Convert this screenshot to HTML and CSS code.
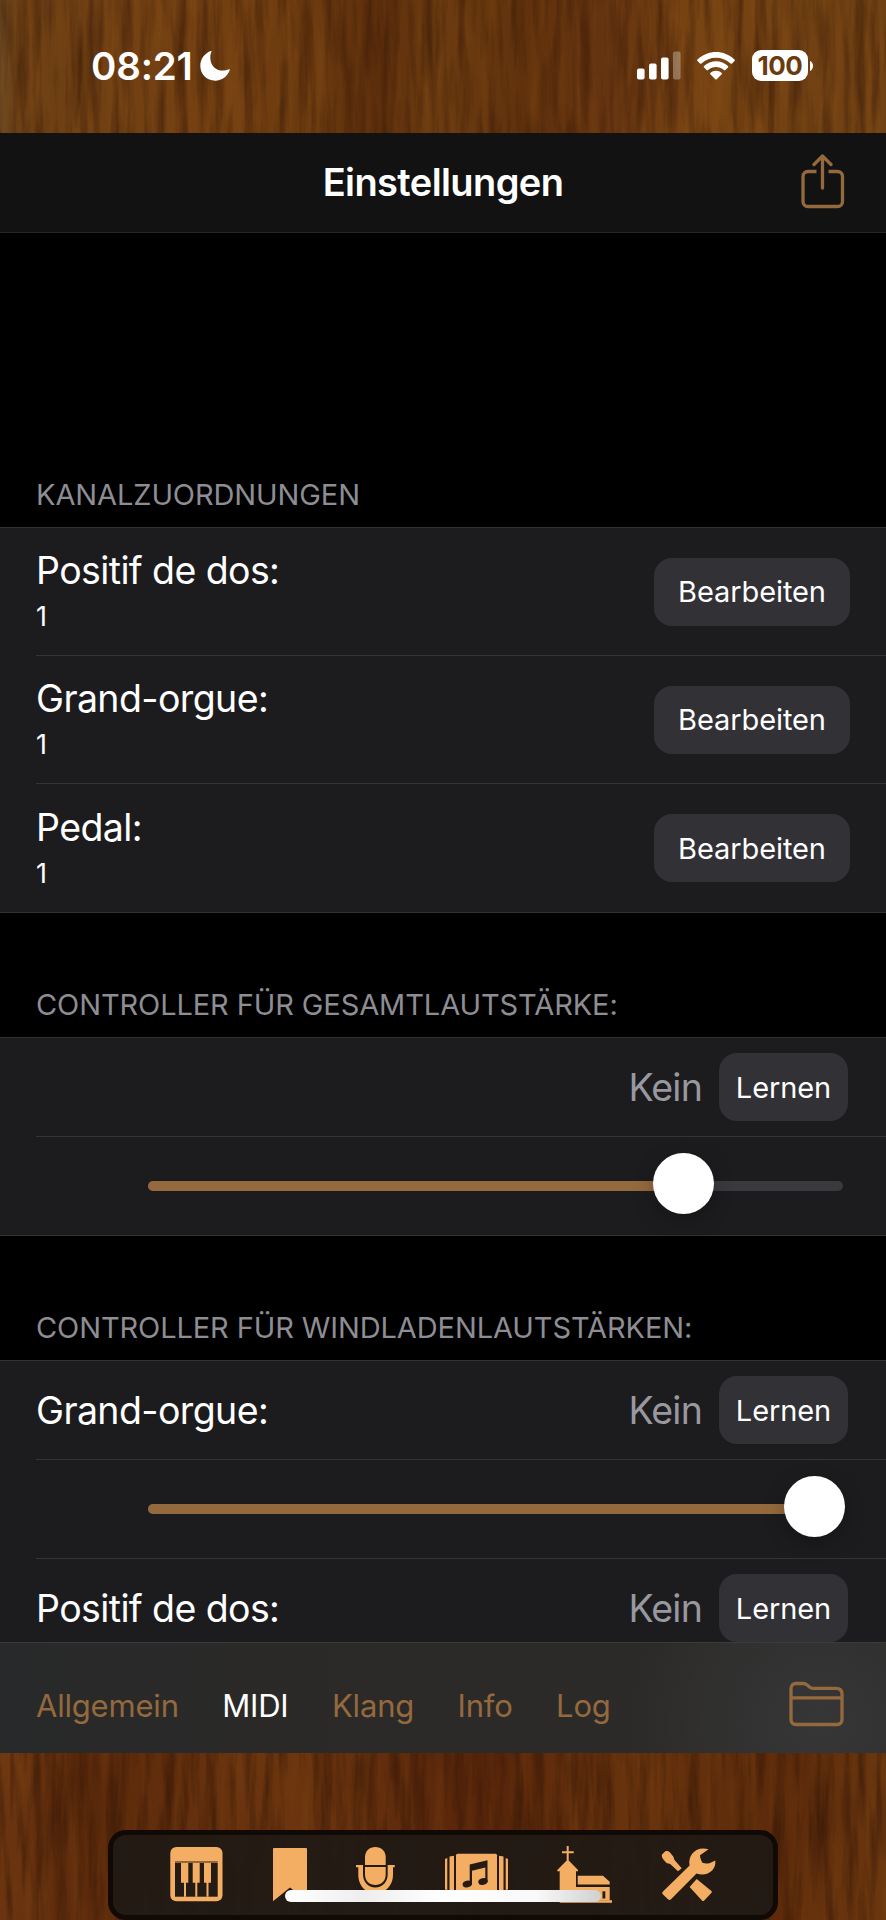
FILE: index.html
```
<!DOCTYPE html>
<html lang="de">
<head>
    <meta charset="UTF-8">
    <meta name="viewport" content="width=device-width, initial-scale=1.0">
    <title>Einstellungen</title>
    <link rel="stylesheet" href="styles.css">
</head>
<body>
    <div class="screen">
        <!-- wood grain behind everything -->
        <svg class="wood" width="886" height="1920">
            <defs>
                <linearGradient id="woodTop" x1="0" x2="1" y1="0" y2="0">
                    <stop offset="0" stop-color="#6f4a22"/>
                    <stop offset="0.02" stop-color="#6c3f14"/>
                    <stop offset="0.22" stop-color="#754112"/>
                    <stop offset="0.36" stop-color="#6a390f"/>
                    <stop offset="0.42" stop-color="#5d2e0c"/>
                    <stop offset="0.5" stop-color="#6b3b10"/>
                    <stop offset="0.6" stop-color="#60310c"/>
                    <stop offset="0.68" stop-color="#643310"/>
                    <stop offset="0.78" stop-color="#784413"/>
                    <stop offset="1" stop-color="#6e4013"/>
                </linearGradient>
                <linearGradient id="woodBottom" x1="0" x2="1" y1="0" y2="0">
                    <stop offset="0" stop-color="#6b3510"/>
                    <stop offset="0.1" stop-color="#5c2a0b"/>
                    <stop offset="0.33" stop-color="#6b350f"/>
                    <stop offset="0.55" stop-color="#56240a"/>
                    <stop offset="0.72" stop-color="#69340e"/>
                    <stop offset="0.88" stop-color="#5c2a0b"/>
                    <stop offset="1" stop-color="#6a370f"/>
                </linearGradient>
                <filter id="grain" x="0" y="0" width="100%" height="100%" color-interpolation-filters="sRGB">
                    <feTurbulence type="fractalNoise" baseFrequency="0.09 0.008" numOctaves="4" seed="7"/>
                    <feColorMatrix values="0 0 0 0 0.17  0 0 0 0 0.07  0 0 0 0 0.02  2 0 0 0 -0.85"/>
                </filter>
                <filter id="shine" x="0" y="0" width="100%" height="100%" color-interpolation-filters="sRGB">
                    <feTurbulence type="fractalNoise" baseFrequency="0.06 0.006" numOctaves="3" seed="21"/>
                    <feColorMatrix values="0 0 0 0 0.58  0 0 0 0 0.34  0 0 0 0 0.1  0 1.4 0 0 -0.64"/>
                </filter>
            </defs>
            <rect width="886" height="140" fill="url(#woodTop)"/>
            <rect width="886" height="140" filter="url(#shine)" opacity="0.5"/>
            <rect width="886" height="140" filter="url(#grain)" opacity="0.6"/>
            <rect y="1740" width="886" height="180" fill="url(#woodBottom)"/>
            <rect y="1740" width="886" height="180" filter="url(#shine)" opacity="0.35"/>
            <rect y="1740" width="886" height="180" filter="url(#grain)" opacity="0.7"/>
        </svg>

        <div class="statusbar">
            <span class="time">08:21</span>
            <svg class="moon" width="30" height="30" viewBox="0 0 30 30">
                <path fill="#fff" d="M11.5 0.6C10.5 3 10.2 5 10.4 8C10.9 15 16 19.600 22.5 19.600C25 19.600 27 19.200 29 18.300C29.600 18.100 30 18.500 29.800 19.100C27.500 25.500 22 29.700 15.300 29.700C6.800 29.700 0.300 23.300 0.300 14.800C0.300 8.200 4.400 2.600 10.700 0.100C11.400 -0.100 11.800 0.100 11.500 0.600Z"/>
            </svg>
            <svg class="signal" width="44" height="29" viewBox="0 0 44 29" fill="#fff">
                <rect x="0" y="17.500" width="7.600" height="11" rx="2"/>
                <rect x="12" y="12.500" width="7.600" height="16" rx="2"/>
                <rect x="24" y="6.500" width="7.600" height="22" rx="2"/>
                <rect x="36" y="0.500" width="7.600" height="28" rx="2" opacity="0.3"/>
            </svg>
            <svg class="wifi" width="38" height="28" viewBox="0 0 38 28" fill="#fff">
                <path d="M0.500 7.500C11 -2.500 27 -2.500 37.500 7.500C37.900 7.900 37.900 8.500 37.500 8.900L35 11.500C34.600 11.900 34 11.900 33.600 11.500C25.300 3.800 12.700 3.800 4.400 11.500C4 11.900 3.400 11.900 3 11.500L0.500 8.900C0.100 8.500 0.100 7.900 0.500 7.500Z"/>
                <path d="M7 14.100C13.800 7.700 24.200 7.700 31 14.100C31.400 14.500 31.400 15.100 31 15.500L28.400 18.100C28 18.500 27.400 18.500 27 18.100C22.400 14 15.600 14 11 18.100C10.600 18.500 10 18.500 9.600 18.100L7 15.500C6.600 15.100 6.600 14.500 7 14.100Z"/>
                <path d="M13.300 20.900C16.500 18.100 21.500 18.100 24.700 20.900C25.100 21.300 25.100 21.800 24.700 22.200L19.700 27.200C19.300 27.600 18.700 27.600 18.300 27.200L13.300 22.200C12.900 21.800 12.900 21.300 13.300 20.900Z"/>
            </svg>
            <span class="battery">100</span>
            <svg class="cap" width="3" height="10" viewBox="0 0 3 10"><path fill="#fff" d="M0 0C4 1.500 4 8.500 0 10Z"/></svg>
        </div>

        <div class="navbar">
            <h1>Einstellungen</h1>
            <svg class="share" width="44" height="56" viewBox="0 0 44 56" fill="none" stroke="#94693d" stroke-width="3.300" stroke-linecap="round" stroke-linejoin="round">
                <path stroke-linecap="butt" d="M15.500 17.500H7C4 17.500 2 19.500 2 22.500V47.500C2 50.500 4 52.500 7 52.500H36.500C39.500 52.500 41.500 50.500 41.500 47.500V22.500C41.500 19.500 39.500 17.500 36.500 17.500H27.500"/>
                <path d="M21.500 34V2.500M13 10.500L21.500 2L30 10.500"/>
            </svg>
        </div>

        <div class="content">
            <h2 class="first">KANALZUORDNUNGEN</h2>
            <div class="group">
                <div class="row tall">
                    <div class="channel"><span class="label">Positif de dos:</span><span class="sub">1</span></div>
                    <button class="edit">Bearbeiten</button>
                </div>
                <div class="row tall">
                    <div class="channel"><span class="label">Grand-orgue:</span><span class="sub">1</span></div>
                    <button class="edit">Bearbeiten</button>
                </div>
                <div class="row tall">
                    <div class="channel"><span class="label">Pedal:</span><span class="sub">1</span></div>
                    <button class="edit">Bearbeiten</button>
                </div>
            </div>

            <h2>CONTROLLER FÜR GESAMTLAUTSTÄRKE:</h2>
            <div class="group">
                <div class="row">
                    <span class="label"></span>
                    <span class="value">Kein</span>
                    <button class="learn">Lernen</button>
                </div>
                <div class="row">
                    <div class="slider">
                        <div class="fill" style="width: 77%"></div>
                        <div class="thumb" style="left: 504.500px"></div>
                    </div>
                </div>
            </div>

            <h2>CONTROLLER FÜR WINDLADENLAUTSTÄRKEN:</h2>
            <div class="group">
                <div class="row">
                    <span class="label">Grand-orgue:</span>
                    <span class="value">Kein</span>
                    <button class="learn">Lernen</button>
                </div>
                <div class="row">
                    <div class="slider">
                        <div class="fill" style="width: 98%"></div>
                        <div class="thumb" style="left: 635.500px"></div>
                    </div>
                </div>
                <div class="row">
                    <span class="label">Positif de dos:</span>
                    <span class="value">Kein</span>
                    <button class="learn">Lernen</button>
                </div>
            </div>
        </div>

        <div class="toolbar">
            <a class="tab">Allgemein</a>
            <a class="tab active">MIDI</a>
            <a class="tab">Klang</a>
            <a class="tab">Info</a>
            <a class="tab">Log</a>
            <svg class="folder" width="56" height="46" viewBox="0 0 56 46" fill="none" stroke="#94693d" stroke-width="3.300" stroke-linejoin="round">
                <path d="M2 38V8C2 4.500 4 2.500 7 2.500H14C16 2.500 17.200 3.200 18.500 4.300L20.500 6C21.700 7 22.700 7.300 24 7.300H47C51 7.300 53 9.300 53 13V38C53 41.500 51 43.500 48 43.500H7C4 43.500 2 41.500 2 38Z"/>
                <path d="M2 16.800H53"/>
            </svg>
        </div>

        <div class="footer">
            <div class="dock">
                <!-- keyboard -->
                <svg width="53" height="58" viewBox="0 0 53 58">
                    <rect x="0.300" y="1" width="52.200" height="54.300" rx="6" fill="#f3ae64"/>
                    <rect x="5" y="15" width="42.700" height="2" fill="#94673a"/>
                    <rect x="5" y="17" width="42.700" height="33.700" fill="#241b14"/>
                    <path fill="#f3ae64" d="M11 17h7.300v19.700h-2.300v14h-2v-14h-3zM22.700 17h7v19.700h-2.400v14h-2v-14h-2.600zM34 17h7v19.700h-2.500v14h-2v-14h-2.500z"/>
                </svg>
                <!-- bookmark -->
                <svg width="34" height="58" viewBox="0 0 34 58">
                    <path fill="#f3ae64" d="M0 3a1 1 0 0 1 1-1h32a1 1 0 0 1 1 1v52L17 41.500L0 55.300Z"/>
                </svg>
                <!-- microphone -->
                <svg width="39" height="58" viewBox="0 0 39 58" fill="#f3ae64">
                    <path d="M9 19V11.300C9 5 13.500 1 19.300 1S29.700 5 29.700 11.300V19Z"/>
                    <path d="M9 21H29.700V28.500C29.700 35 25 39 19.300 39S9 35 9 28.500Z"/>
                    <path d="M0 19H7V28C7 36 12 41.500 19.300 41.500S31.700 36 31.700 28V19H38.700V21.300H37V29C37 38 31.500 45 23.500 46.500H15.200C7.500 45 2.300 38 2.300 29V21.300H0Z"/>
                </svg>
                <!-- combinations -->
                <svg width="63" height="58" viewBox="0 0 63 58">
                    <g fill="#f3ae64">
                        <rect x="11" y="7.700" width="41" height="44" rx="1.500"/>
                        <path d="M4.500 10.500L9 9.700V48H4.500ZM58.500 10.500L54 9.700V48H58.500ZM0 13L2.300 12V44L0 43.500ZM63 13L60.700 12V44L63 43.500Z"/>
                    </g>
                    <g fill="#241b14">
                        <path d="M24.700 18.500L42.500 14.300V36H40.300V21.500L27 24.800V38.500H24.700Z"/>
                        <ellipse cx="22.300" cy="38" rx="4.800" ry="3.300" transform="rotate(-15 22.300 38)"/>
                        <ellipse cx="38" cy="35.500" rx="4.800" ry="3.300" transform="rotate(-15 38 35.500)"/>
                    </g>
                </svg>
                <!-- church -->
                <svg width="55" height="58" viewBox="0 0 55 58">
                    <path fill="#f3ae64" d="M9.700 0H11.700V5.300H16.700V7.200H11.700V14.500L21 24V25.300H19V54.300H55V56.700H2.700V25.300H0.300V24L9.700 14.500V7.200H5V5.300H9.700Z"/>
                    <path fill="#f3ae64" d="M20.700 29.800H46L52.700 35.700V38.400H20.700ZM19 41H52.700V54.500H19Z"/>
                    <path fill="#241b14" d="M45.500 45.300H48.300V52.500H45.500Z"/>
                </svg>
                <!-- tools -->
                <svg width="54" height="58" viewBox="0 0 54 58" fill="#f3ae64">
                    <path d="M0 8.500L3.300 5.200C5 4.800 7.300 5.300 8.200 6.700L11.200 10.500C12 11.700 11.700 12.700 12.500 14L19.700 22.200L16 25.300L8.500 18.300C7 17.200 5.500 17.800 4 16.500L1 13C0 11.500-0.500 9.800 0 8.500Z"/>
                    <path d="M34.700 33L49.400 45C50 45.500 50 46.200 49.500 46.800L42.200 54.500C41.500 55.200 40.700 55.200 40 54.500L27.600 41Z"/>
                    <path d="M1 45.500L27.600 19.500C25.500 8.500 35 -0.500 46.500 3.300L38 9.200C38.200 12 39 14.500 40.500 16.800C43 17.800 45.500 17.700 48 17L53.300 14.500C54.500 24 45.500 31 34.500 27.600L9 53.300C8 54.300 7 54.300 6 53.300L1 48.500C0 47.500 0 46.500 1 45.500Z"/>
                </svg>
            </div>
            <div class="home"></div>
        </div>
    </div>
</body>
</html>
```
FILE: styles.css
```
body{
    margin: 0;
    background-color: black;
    color: white;
    font-family: Inter, "Liberation Sans", sans-serif;
}
.screen{
    position: relative;
    width: 886px;
    height: 1920px;
    overflow: hidden;
    display: flex;
    flex-direction: column;
}
.screen > div{
    position: relative;
    box-sizing: border-box;
    flex-shrink: 0;
}
.wood{
    position: absolute;
    top: 0;
    left: 0;
}
.statusbar{
    height: 133px;
    padding: 0 73px 2px 91px;
    display: flex;
    align-items: center;
}
.time{
    width: 109px;
    font-size: 38.500px;
    font-weight: 600;
    letter-spacing: -0.2px;
}
.moon{
    margin-right: auto;
}
.signal{
    margin-right: 16px;
}
.wifi{
    margin-right: 17px;
}
.battery{
    width: 56px;
    height: 31px;
    line-height: 31px;
    border-radius: 9px;
    background-color: white;
    color: #6b3b10;
    text-align: center;
    font-size: 26px;
    font-weight: 700;
    letter-spacing: -0.5px;
}
.cap{
    margin-left: 2px;
}
.navbar{
    height: 100px;
    background-color: #121212;
    border-bottom: 1px solid #262626;
    display: flex;
    align-items: center;
    justify-content: center;
}
h1{
    margin: 0;
    padding-bottom: 1px;
    font-size: 38px;
    font-weight: 600;
    letter-spacing: -0.6px;
}
.share{
    position: absolute;
    right: 41px;
    top: 21px;
}
.content{
    height: 1409px;
    background-color: black;
    overflow: hidden;
}
h2{
    box-sizing: border-box;
    height: 124px;
    margin: 0;
    padding: 0 36px 14px;
    display: flex;
    align-items: flex-end;
    color: #8d8d93;
    font-size: 29px;
    line-height: 36px;
    font-weight: 400;
    letter-spacing: -0.1px;
}
h2.first{
    height: 294px;
}
.group{
    background-color: #1c1c1e;
    border-top: 1px solid #313133;
    border-bottom: 1px solid #313133;
}
.row{
    box-sizing: border-box;
    height: 99px;
    margin-left: 36px;
    padding-right: 38px;
    border-bottom: 1px solid #343436;
    display: flex;
    align-items: center;
}
.row:last-child{
    height: 98px;
    border-bottom: none;
}
.row.tall{
    height: 128px;
    padding-right: 36px;
}
.label{
    flex: 1;
    font-size: 37.500px;
    line-height: 46px;
    letter-spacing: -0.6px;
}
.row > .label{
    padding-top: 2px;
}
.channel{
    flex: 1;
    display: flex;
    flex-direction: column;
    padding-top: 4px;
}
.sub{
    font-size: 27px;
    line-height: 45px;
}
.value{
    margin-right: 17px;
    padding-top: 1px;
    color: #98989f;
    font-size: 37.500px;
    letter-spacing: -0.8px;
}
button{
    height: 68px;
    padding: 0;
    border: none;
    border-radius: 18px;
    background-color: #313136;
    color: white;
    font-family: inherit;
    font-size: 29px;
    font-weight: 400;
    letter-spacing: -0.1px;
}
.edit{
    width: 196px;
}
.learn{
    width: 129px;
}
.slider{
    position: relative;
    width: 695px;
    height: 10px;
    margin-left: 112px;
    border-radius: 5px;
    background-color: #3a3a3e;
}
.fill{
    height: 10px;
    border-radius: 5px;
    background-color: #94693d;
}
.thumb{
    position: absolute;
    top: -28px;
    width: 61px;
    height: 61px;
    border-radius: 50%;
    background-color: white;
    box-shadow: 0 6px 20px rgba(0, 0, 0, 0.25);
}
.toolbar{
    height: 111px;
    padding: 15px 41px 0 36px;
    border-top: 1px solid #3b3b3b;
    background: radial-gradient(circle at 820px 80px, #363636 0, #333333 60px, rgba(44, 42, 40, 0) 190px), linear-gradient(90deg, #28292a, #2c2a28 45%, #2c2b29);
    display: flex;
    align-items: center;
    gap: 43.500px;
}
.tab{
    color: #94693d;
    font-size: 31px;
    letter-spacing: -0.2px;
}
.tab.active{
    color: white;
}
.folder{
    margin-left: auto;
    margin-bottom: 4px;
}
.footer{
    height: 167px;
    padding-top: 77px;
}
.dock{
    box-sizing: border-box;
    width: 670px;
    height: 90px;
    margin: 0 auto;
    padding-top: 11px;
    border: 5px solid #110903;
    border-radius: 18px;
    background-color: rgba(32, 26, 21, 0.94);
    display: flex;
    justify-content: center;
    gap: 49.500px;
}
.dock svg{
    overflow: visible;
}
.home{
    position: absolute;
    left: 285px;
    top: 137px;
    width: 316px;
    height: 12px;
    border-radius: 6px;
    background: linear-gradient(90deg, #fff, #eee 25%, #fff 50%, #f8f8f8 80%, #d0d0d0);
}
```
